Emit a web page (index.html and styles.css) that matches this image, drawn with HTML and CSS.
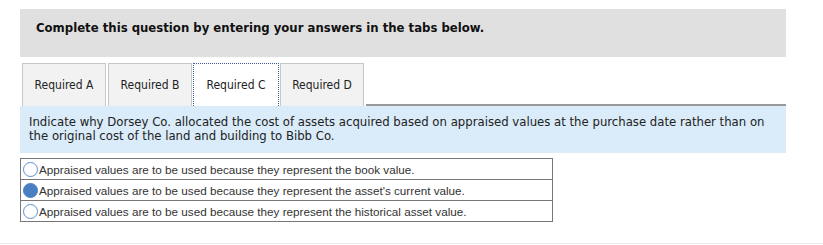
FILE: index.html
```html
<!DOCTYPE html>
<html>
<head>
<meta charset="utf-8">
<link rel="stylesheet" href="styles.css">
</head>
<body>
<div class="page">
  <div class="banner">Complete this question by entering your answers in the tabs below.</div>
  <div class="tabs">
    <div class="tab">Required A</div>
    <div class="tab">Required B</div>
    <div class="tab active">Required C</div>
    <div class="tab">Required D</div>
    <div class="filler"></div>
  </div>
  <div class="prompt">Indicate why Dorsey Co. allocated the cost of assets acquired based on appraised values at the purchase date rather than on the original cost of the land and building to Bibb Co.</div>
  <div class="options">
    <div class="opt"><span class="radio"></span><span>Appraised values are to be used because they represent the book value.</span></div>
    <div class="opt"><span class="radio checked"></span><span>Appraised values are to be used because they represent the asset's current value.</span></div>
    <div class="opt"><span class="radio"></span><span>Appraised values are to be used because they represent the historical asset value.</span></div>
  </div>
</div>
<div class="rule"></div>
</body>
</html>
```
FILE: styles.css
```css
html, body { margin: 0; padding: 0; background: #fff; }
body { width: 823px; height: 245px; overflow: hidden; }
.page { padding: 9px 0 0 20px; width: 766px; }
.banner {
  background: #e0e0e0;
  height: 48px;
  box-sizing: border-box;
  padding: 11px 0 0 16px;
  font-family: "DejaVu Sans Condensed", "DejaVu Sans", sans-serif;
  font-weight: bold;
  font-size: 13px;
  color: #111;
}
.tabs { display: flex; margin-top: 6px; padding-left: 2px; height: 43px; }
.tab {
  width: 84px;
  box-sizing: border-box;
  margin-right: 2px;
  background: #f2f2f2;
  border: 1px solid #c8c8c8;
  border-bottom: none;
  display: flex;
  align-items: center;
  justify-content: center;
  font-family: "DejaVu Sans Condensed", "DejaVu Sans", sans-serif;
  font-size: 12px;
  color: #222;
}
.tab.active { background: #fff; border: 1px dotted #3a5a9a; border-bottom: none; margin-left: -1px; margin-right: 1px; width: 86px; }
.filler { flex: 1; border-bottom: 2px solid #999; }
.prompt {
  background: #daebf9;
  padding: 9px 9px 10px 9px;
  font-family: "DejaVu Sans Condensed", "DejaVu Sans", sans-serif;
  font-size: 13px;
  line-height: 14px;
  color: #222;
}
.options { margin-top: 5px; width: 533px; border: 1px solid #777; box-sizing: border-box; }
.opt {
  display: flex;
  align-items: center;
  height: 20px;
  border-top: 1px solid #777;
  font-family: "Liberation Sans", Arial, sans-serif;
  font-size: 11.7px;
  color: #333;
}
.opt:first-child { border-top: none; }
.radio {
  width: 13px; height: 13px;
  border: 1px solid #5b8fd1;
  border-radius: 50%;
  margin: 0 1px 0 2px;
  background: #fff;
  flex: none;
}
.radio.checked { background: #4a7fc1; border-color: #4a7fc1; }
.rule { margin-top: 21px; border-top: 1px solid #ececec; width: 823px; }
```
